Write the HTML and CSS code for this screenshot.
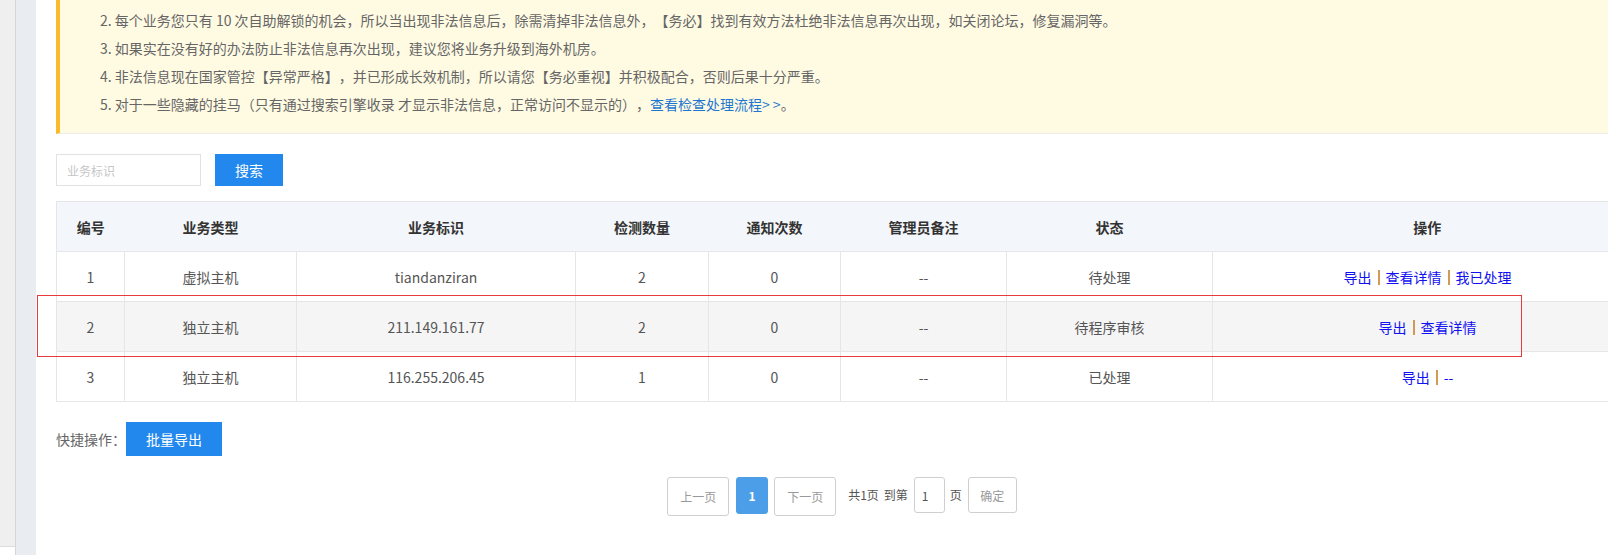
FILE: index.html
```html
<!DOCTYPE html>
<html lang="zh-CN">
<head>
<meta charset="utf-8">
<title>非法信息检测</title>
<link rel="stylesheet" href="styles.css">
</head>
<body>
<div class="page">
  <div class="rail"><div class="rail-top"></div></div>
  <div class="rail2"></div>
  <main class="main">
    <div class="notice">
      <p>2. 每个业务您只有 10 次自助解锁的机会，所以当出现非法信息后，除需清掉非法信息外，【务必】找到有效方法杜绝非法信息再次出现，如关闭论坛，修复漏洞等。</p>
      <p>3. 如果实在没有好的办法防止非法信息再次出现，建议您将业务升级到海外机房。</p>
      <p>4. 非法信息现在国家管控【异常严格】，并已形成长效机制，所以请您【务必重视】并积极配合，否则后果十分严重。</p>
      <p>5. 对于一些隐藏的挂马（只有通过搜索引擎收录 才显示非法信息，正常访问不显示的），<a class="flow" href="#">查看检查处理流程&gt; &gt;</a>。</p>
    </div>
    <div class="search">
      <input class="search-input" type="text" placeholder="业务标识">
      <button class="btn search-btn" type="button">搜索</button>
    </div>
    <table class="grid">
      <colgroup>
        <col class="c1"><col class="c2"><col class="c3"><col class="c4"><col class="c5"><col class="c6"><col class="c7"><col class="c8">
      </colgroup>
      <thead>
        <tr><th>编号</th><th>业务类型</th><th>业务标识</th><th>检测数量</th><th>通知次数</th><th>管理员备注</th><th>状态</th><th>操作</th></tr>
      </thead>
      <tbody>
        <tr><td>1</td><td>虚拟主机</td><td>tiandanziran</td><td>2</td><td>0</td><td>--</td><td>待处理</td>
          <td><a href="#">导出</a><span class="sep"></span><a href="#">查看详情</a><span class="sep"></span><a href="#">我已处理</a></td></tr>
        <tr class="alt"><td>2</td><td>独立主机</td><td>211.149.161.77</td><td>2</td><td>0</td><td>--</td><td>待程序审核</td>
          <td><a href="#">导出</a><span class="sep"></span><a href="#">查看详情</a></td></tr>
        <tr><td>3</td><td>独立主机</td><td>116.255.206.45</td><td>1</td><td>0</td><td>--</td><td>已处理</td>
          <td><a href="#">导出</a><span class="sep"></span><a href="#">--</a></td></tr>
      </tbody>
    </table>
    <div class="quick">
      <span class="quick-label">快捷操作：</span>
      <button class="btn quick-btn" type="button">批量导出</button>
    </div>
    <div class="pager">
      <a class="pg pg-nav" href="#">上一页</a>
      <span class="pg pg-cur">1</span>
      <a class="pg pg-nav" href="#">下一页</a>
      <span class="pg-text pg-total">共1页</span>
      <span class="pg-text">到第</span>
      <input class="pg-input" type="text" value="1">
      <span class="pg-text pg-unit">页</span>
      <button class="pg pg-ok" type="button">确定</button>
    </div>
  </main>
</div>
<div class="highlight"></div>
</body>
</html>
```
FILE: styles.css
```css
html, body {
  margin: 0;
  padding: 0;
  overflow: hidden;
  background: #fff;
}
body {
  font-family: "Microsoft YaHei", "Noto Sans CJK SC", "Noto Sans", sans-serif;
  font-size: 14px;
  color: #555;
  width: 1608px;
  height: 555px;
  position: relative;
  text-spacing-trim: space-all;
}
.page {
  display: flex;
  height: 555px;
}
.rail {
  width: 15px;
  flex: none;
  border-right: 1px solid #d6d6d6;
  background: #fff;
}
.rail-top {
  height: 546px;
  background: #efefef;
  border-bottom: 1px solid #dcdcdc;
}
.rail2 {
  width: 20px;
  flex: none;
  background: #e9edf2;
}
.main {
  flex: none;
  width: 1586px;
  padding: 0 20px;
}
.notice {
  background: #fffbe3;
  border-left: 4px solid #fbb92c;
  border-bottom: 1px solid #ececec;
  padding: 6px 0 15px 40px;
  color: #666;
}
.notice p {
  margin: 0;
  line-height: 28px;
  white-space: nowrap;
}
.notice .flow {
  color: #1e76d0;
  text-decoration: none;
}
.search {
  display: flex;
  gap: 14px;
  margin-top: 20px;
}
.search-input {
  box-sizing: border-box;
  width: 145px;
  height: 32px;
  border: 1px solid #e2e2e2;
  padding: 0 10px;
  font: inherit;
  font-size: 12px;
  color: #555;
  outline: none;
}
.search-input::placeholder {
  color: #c6c6c6;
}
.btn {
  border: none;
  background: #2388ee;
  color: #fff;
  font: inherit;
  font-size: 14px;
  padding: 0;
  cursor: pointer;
}
.search-btn {
  width: 68px;
  height: 32px;
}
.grid {
  margin-top: 15px;
  border-collapse: collapse;
  table-layout: fixed;
  width: 1586px;
  border: 1px solid #e6e6e6;
}
.c1 { width: 68px; }
.c2 { width: 172px; }
.c3 { width: 279px; }
.c4 { width: 133px; }
.c5 { width: 132px; }
.c6 { width: 166px; }
.c7 { width: 206px; }
.c8 { width: 430px; }
.grid th {
  height: 49px;
  background: #f3f6fa;
  color: #333;
  font-weight: bold;
  text-align: center;
  padding: 0;
  border-bottom: 1px solid #e6e6e6;
}
.grid td {
  height: 49px;
  padding: 0;
  text-align: center;
  border: 1px solid #e6e6e6;
  color: #555;
}
.grid tr.alt td {
  background: #f5f5f5;
}
.grid td a {
  color: #1010f0;
  text-decoration: none;
}
.sep {
  display: inline-block;
  width: 2px;
  height: 15px;
  background: #d19a58;
  margin: 0 6px;
  vertical-align: -2px;
}
.quick {
  display: flex;
  align-items: center;
  margin-top: 20px;
}
.quick-label {
  color: #666;
  width: 70px;
}
.quick-btn {
  width: 96px;
  height: 34px;
}
.pager {
  display: flex;
  align-items: flex-start;
  justify-content: center;
  padding-right: 14px;
  margin-top: 21px;
  font-size: 12px;
}
.pg {
  box-sizing: border-box;
  display: flex;
  align-items: center;
  justify-content: center;
  border: 1px solid #cfcfcf;
  border-radius: 3px;
  color: #999;
  background: #fff;
  text-decoration: none;
  font: inherit;
  font-size: 12px;
}
.pg-nav {
  width: 62px;
  height: 39px;
}
.pg-cur {
  width: 32px;
  height: 37px;
  margin: 0 6px 0 7px;
  background: #4c9ee9;
  border-color: #4c9ee9;
  color: #fff;
  font-weight: bold;
}
.pg-text {
  color: #555;
  line-height: 36px;
  margin-left: 5px;
}
.pg-total {
  margin-left: 12px;
}
.pg-input {
  box-sizing: border-box;
  width: 31px;
  height: 36px;
  margin-left: 6px;
  border: 1px solid #cfcfcf;
  border-radius: 3px;
  padding: 0 0 0 7px;
  font: inherit;
  font-size: 12px;
  color: #555;
  outline: none;
}
.pg-unit {
  margin-left: 5px;
}
.pg-ok {
  width: 49px;
  height: 36px;
  margin-left: 6px;
  padding: 0;
}
.highlight {
  position: absolute;
  left: 37px;
  top: 295px;
  width: 1483px;
  height: 60px;
  border: 1px solid #e8393c;
  pointer-events: none;
}
```
